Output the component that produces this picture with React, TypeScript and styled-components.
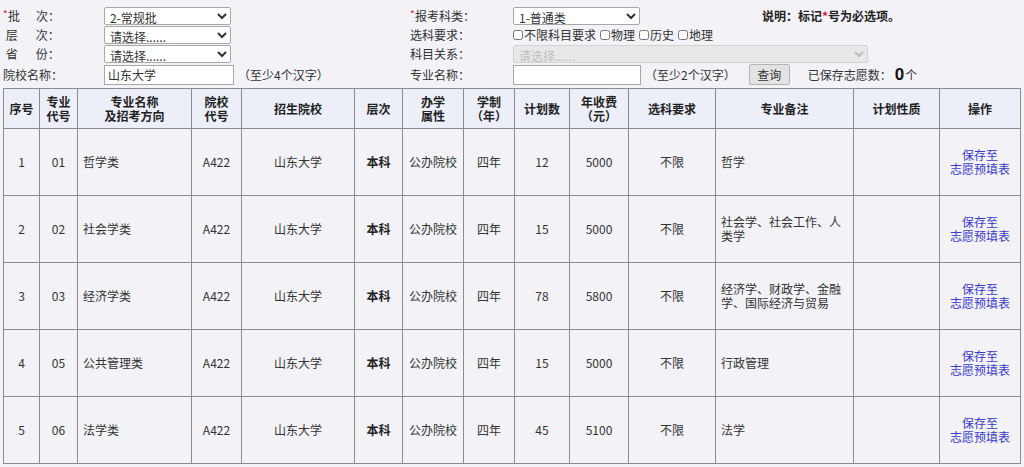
import React from 'react';
import styled, { createGlobalStyle } from 'styled-components';

type Major = {
  no: number;
  code: string;
  name: string;
  fee: string;
  plan: string;
  note: string;
};

const majors: Major[] = [
  { no: 1, code: '01', name: '哲学类', plan: '12', fee: '5000', note: '哲学' },
  { no: 2, code: '02', name: '社会学类', plan: '15', fee: '5000', note: '社会学、社会工作、人类学' },
  { no: 3, code: '03', name: '经济学类', plan: '78', fee: '5800', note: '经济学、财政学、金融学、国际经济与贸易' },
  { no: 4, code: '05', name: '公共管理类', plan: '15', fee: '5000', note: '行政管理' },
  { no: 5, code: '06', name: '法学类', plan: '45', fee: '5100', note: '法学' },
];

const colWidths = [36, 38, 114, 50, 113, 48, 61, 51, 55, 59, 87, 138, 86, 81];

const GlobalStyle = createGlobalStyle`
  html, body {
    margin: 0;
    padding: 0;
    background: #f2f2f7;
  }
  body {
    font-family: "Noto Sans CJK SC", "Noto Sans", sans-serif;
    font-size: 12px;
    color: #333;
  }
`;

const Page = styled.div`
  padding: 6px 3px 0 3px;
`;

const FormGrid = styled.div`
  display: grid;
  grid-template-columns: 101px 306px 103px 1fr;
  grid-template-rows: 19px 19px 19px 23px;
  align-items: center;
  margin-bottom: 2px;
`;

const Label = styled.div`
  display: flex;
  align-items: center;
  white-space: nowrap;
  color: #333;
  line-height: 14px;
`;

const Star = styled.span`
  color: #e0182a;
  font-size: 10px;
  width: 5px;
  align-self: flex-start;
  line-height: 10px;
`;

const InlineStar = styled.span`
  color: #e0182a;
`;

const Spread = styled.span<{ gap: number }>`
  margin-right: ${(p) => p.gap}px;
`;

const Cell = styled.div`
  display: flex;
  align-items: center;
  white-space: nowrap;
`;

const Select = styled.select<{ w: number }>`
  width: ${(p) => p.w}px;
  height: 18px;
  box-sizing: border-box;
  font-family: inherit;
  font-size: 12px;
  line-height: 14px;
  color: #333;
  padding: 0 1px;
  border: 1px solid #a8a8a8;
  border-radius: 2px;
  background: #fff;
  &:disabled {
    background: #e4e4e4;
    color: #aaa;
    border-color: #c6c6c6;
  }
`;

const TextInput = styled.input<{ w: number }>`
  width: ${(p) => p.w}px;
  height: 20px;
  box-sizing: border-box;
  font-family: inherit;
  font-size: 12px;
  color: #333;
  padding: 0 3px;
  border: 1px solid #a8a8a8;
  background: #fff;
`;

const Hint = styled.span<{ ml: number }>`
  margin-left: ${(p) => p.ml}px;
  color: #333;
`;

const Note = styled.span`
  margin-left: 122px;
  font-weight: bold;
  color: #222;
`;

const CheckGroup = styled.label`
  display: inline-flex;
  align-items: center;
  margin-right: 4px;
  color: #333;
`;

const Check = styled.input`
  width: 10px;
  height: 10px;
  margin: 0 1px 0 0;
`;

const QueryButton = styled.button`
  margin-left: 13px;
  width: 41px;
  height: 21px;
  font-family: inherit;
  font-size: 12px;
  color: #333;
  background: #e3e3e3;
  border: 1px solid #b4b4b4;
  border-radius: 2px;
  padding: 0;
`;

const Saved = styled.span`
  margin-left: 18px;
  display: inline-flex;
  align-items: baseline;
  color: #333;
`;

const Count = styled.b`
  font-family: "Liberation Sans", Arial, sans-serif;
  font-size: 17px;
  color: #111;
  margin: 0 1px 0 3px;
`;

const Table = styled.table`
  width: 1017px;
  table-layout: fixed;
  border-collapse: collapse;
  border: 1px solid #8c8c8c;
  color: #333;
`;

const Th = styled.th`
  height: 39px;
  background: #eceef8;
  border: 1px solid #8c8c8c;
  font-weight: bold;
  font-size: 12px;
  line-height: 14px;
  color: #222;
  padding: 0 2px;
`;

const Td = styled.td<{ align?: 'left' | 'center'; strong?: boolean }>`
  height: 66px;
  border: 1px solid #8c8c8c;
  text-align: ${(p) => p.align || 'center'};
  font-weight: ${(p) => (p.strong ? 'bold' : 'normal')};
  color: ${(p) => (p.strong ? '#222' : '#333')};
  line-height: 14px;
  padding: 0 5px;
  word-break: break-all;
`;

const ActionLink = styled.a`
  color: #3a3acb;
  text-decoration: none;
  line-height: 14px;
  display: inline-block;
  cursor: pointer;
`;

const headers: React.ReactNode[] = [
  '序号',
  <>专业<br />代号</>,
  <>专业名称<br />及招考方向</>,
  <>院校<br />代号</>,
  '招生院校',
  '层次',
  <>办学<br />属性</>,
  <>学制<br />（年）</>,
  '计划数',
  <>年收费<br />（元）</>,
  '选科要求',
  '专业备注',
  '计划性质',
  '操作',
];

const App = () => {
  return (
    <Page>
      <GlobalStyle />
      <FormGrid>
        <Label>
          <Star>*</Star>
          <Spread gap={16}>批</Spread>次：
        </Label>
        <Cell>
          <Select w={127} defaultValue="2">
            <option value="2">2-常规批</option>
          </Select>
        </Cell>
        <Label>
          <Star>*</Star>报考科类：
        </Label>
        <Cell>
          <Select w={127} defaultValue="1">
            <option value="1">1-普通类</option>
          </Select>
          <Note>
            说明：标记<InlineStar>*</InlineStar>号为必选项。
          </Note>
        </Cell>

        <Label>
          <Spread gap={18}>&nbsp;层</Spread>次：
        </Label>
        <Cell>
          <Select w={127}>
            <option>请选择......</option>
          </Select>
        </Cell>
        <Label>选科要求：</Label>
        <Cell>
          <CheckGroup>
            <Check type="checkbox" />不限科目要求
          </CheckGroup>
          <CheckGroup>
            <Check type="checkbox" />物理
          </CheckGroup>
          <CheckGroup>
            <Check type="checkbox" />历史
          </CheckGroup>
          <CheckGroup>
            <Check type="checkbox" />地理
          </CheckGroup>
        </Cell>

        <Label>
          <Spread gap={18}>&nbsp;省</Spread>份：
        </Label>
        <Cell>
          <Select w={127}>
            <option>请选择......</option>
          </Select>
        </Cell>
        <Label>科目关系：</Label>
        <Cell>
          <Select w={355} disabled>
            <option>请选择......</option>
          </Select>
        </Cell>

        <Label>院校名称：</Label>
        <Cell>
          <TextInput w={130} defaultValue="山东大学" />
          <Hint ml={4}>（至少4个汉字）</Hint>
        </Cell>
        <Label>专业名称：</Label>
        <Cell>
          <TextInput w={128} />
          <Hint ml={4}>（至少2个汉字）</Hint>
          <QueryButton>查询</QueryButton>
          <Saved>
            已保存志愿数：<Count>0</Count>个
          </Saved>
        </Cell>
      </FormGrid>

      <Table>
        <colgroup>
          {colWidths.map((w, i) => (
            <col key={i} style={{ width: w }} />
          ))}
        </colgroup>
        <thead>
          <tr>
            {headers.map((h, i) => (
              <Th key={i}>{h}</Th>
            ))}
          </tr>
        </thead>
        <tbody>
          {majors.map((m) => (
            <tr key={m.no}>
              <Td>{m.no}</Td>
              <Td>{m.code}</Td>
              <Td align="left">{m.name}</Td>
              <Td>A422</Td>
              <Td>山东大学</Td>
              <Td strong>本科</Td>
              <Td>公办院校</Td>
              <Td>四年</Td>
              <Td>{m.plan}</Td>
              <Td>{m.fee}</Td>
              <Td>不限</Td>
              <Td align="left">{m.note}</Td>
              <Td></Td>
              <Td>
                <ActionLink>
                  保存至
                  <br />
                  志愿预填表
                </ActionLink>
              </Td>
            </tr>
          ))}
        </tbody>
      </Table>
    </Page>
  );
};

export default App;
